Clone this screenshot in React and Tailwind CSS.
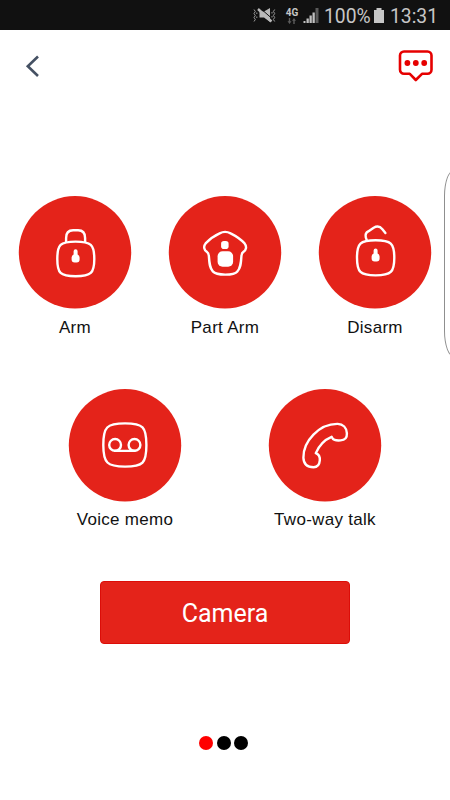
import React from "react";

const StatusBar = () => {
  return (
    <div className="flex h-[30px] items-center bg-[#111111] pl-[252px] font-['Roboto',sans-serif] text-[#c6c6c6]">
      <svg width="26" height="30" viewBox="0 0 26 30" fill="none" className="shrink-0">
        <path d="M7.500 11.500h4.500l6-3.500v14l-6-4.500H7.500z" fill="#b9b9b9" />
        <path d="M8 8l12 10.500" stroke="#111111" strokeWidth="1" />
        <path d="M6 9l13.500 12.500" stroke="#b9b9b9" strokeWidth="2.400" />
        <path
          d="M2 9.500l1.300 2-1.300 2 1.300 2-1.300 2 1.300 2-1.300 2M22.700 9.500l-1.300 2 1.300 2-1.300 2 1.300 2-1.300 2 1.300 2M4.800 12.500v1.500M4.800 16.500v1.500M20 12v1.500M20 16v1.500"
          stroke="#999999"
          strokeWidth="1"
        />
      </svg>
      <div className="ml-[7px] flex w-[14px] flex-col items-center">
        <span className="mt-px text-[10px] font-bold leading-[9px]">4G</span>
        <svg width="10" height="6" viewBox="0 0 10 6" fill="#5c5c5c" className="mt-px">
          <path d="M2.500 6L.5 3.300h1.300V0h1.400v3.300h1.300zM7 0l2 2.700H7.700V6H6.300V2.700H5z" />
        </svg>
      </div>
      <svg width="18" height="30" viewBox="0 0 18 30" className="ml-[3px] shrink-0">
        <path
          d="M1.500 21h2v2h-2zM4.500 18.500h2.300V23H4.500zM7.500 15.500h2.300V23H7.500zM10.500 12.500h2.300V23h-2.300z"
          fill="#c0c0c0"
        />
        <path d="M13.500 8h3v15h-3z" fill="#5a5a5a" />
      </svg>
      <span className="ml-[4px] mt-[3px] w-[46px] whitespace-nowrap text-[19.300px] leading-[30px]">100%</span>
      <svg width="12" height="30" viewBox="0 0 12 30" className="ml-[3px] shrink-0" fill="#c6c6c6">
        <path d="M3.500 8h5v2H11v13H1V10h2.500z" />
      </svg>
      <span className="ml-[5px] mt-[3px] whitespace-nowrap text-[19.300px] leading-[30px]">13:31</span>
    </div>
  );
};

const KeyHole = ({ y = 0 }) => (
  <path
    transform={`translate(0 ${y})`}
    d="M55 55.300a2 2 0 0 1 4 0v3.200q2 1 2 3v2q0 3-3 3h-2q-3 0-3-3v-2q0-2 2-3z"
    fill="#fff"
    stroke="none"
  />
);

const ArmIcon = () => (
  <>
    <path d="M57 45.700c15.500 0 18.700 3 18.700 17.300S72.500 80.300 57 80.300 38.700 77.300 38.700 63 41.500 45.700 57 45.700z" />
    <path d="M47.500 46v-4c0-5 2.500-7.700 7-7.700h5c4.500 0 7 2.700 7 7.700v4" />
    <KeyHole />
  </>
);

const PartArmIcon = () => (
  <>
    <path d="M51 37.500q5.500-3 11 0C67 40 72.500 43.800 76 47.500c2.500 3 1.500 7-1.200 8.500-1.500.8-1.800 2-2 4.500-.5 8-1 12-4 15-2 2.500-5 3.200-12.200 3.200s-10.200-.7-12.400-3.200c-2.900-3-3.400-7-3.900-15-.2-2.500-.5-3.700-2-4.500-2.700-1.500-3.800-5.500-1.300-8.500 3.500-3.700 8.500-7.500 14-10z" />
    <rect x="52.500" y="45" width="7.500" height="8.200" rx="2.800" fill="#fff" stroke="none" />
    <rect x="49" y="55.300" width="15.500" height="15.500" rx="5" fill="#fff" stroke="none" />
  </>
);

const DisarmIcon = () => (
  <>
    <path d="M57 44.300c15.500 0 18.700 3 18.700 17.500S72.500 79.500 57 79.500 38.400 76.300 38.400 61.800 41.500 44.300 57 44.300z" />
    <path d="M48.200 44.500l-1-3c-.8-3.200.2-4.800 2.400-6l5.500-3.700c3.500-2.100 6.200-1.600 8.700 1.500l3 3.900" />
    <KeyHole y={-0.8} />
  </>
);

const VoiceIcon = () => (
  <>
    <path d="M56.500 34.500c18 0 21.300 3.500 21.300 21.600s-3.300 21.600-21.300 21.600S34.700 74 34.700 56.100s3.300-21.600 21.800-21.600z" />
    <circle cx="46.500" cy="56" r="5.900" />
    <circle cx="65.900" cy="56" r="5.900" />
    <path d="M46.500 62h19.400" />
  </>
);

const TalkIcon = () => (
  <path d="M69 35c5.500.2 9 3.800 9.300 9.500.2 4.500-1.800 6.800-6.300 7-5.500.3-7.500-.2-9-3.600C55.500 51 50.500 56.500 47.200 64.200c3.500 1.300 4.300 3.500 4 7.300-.4 4.800-2.500 6.800-6.200 6.800-6.500 0-10-3.500-10.200-9.500C34.500 52.500 50.500 34.800 69 35z" />
);

const ActionButton = ({ label, icon }) => {
  return (
    <button className="flex w-[150px] flex-col items-center">
      <svg
        width="114"
        height="113"
        viewBox="0 0 114 113"
        fill="none"
        stroke="#fff"
        strokeWidth="2.400"
        strokeLinecap="round"
        strokeLinejoin="round"
      >
        <circle cx="57" cy="56.300" r="56.200" fill="#e4231a" stroke="none" />
        <g transform="translate(.6 -.1)">{icon}</g>
      </svg>
      <span className="mt-[6.500px] whitespace-nowrap text-[17px] leading-[24px] tracking-[0.300px] text-[#111111]">
        {label}
      </span>
    </button>
  );
};

const App = () => {
  return (
    <div className="relative h-[800px] w-[450px] overflow-hidden bg-white font-['Liberation_Sans',Arial,sans-serif]">
      <StatusBar />

      <header className="flex h-[70px] justify-between pl-[24px] pr-[16px] pt-[18px]">
        <button className="h-[36px]">
          <svg width="18" height="36" viewBox="0 0 18 36" fill="none" stroke="#455163" strokeWidth="2.600">
            <path d="M14 8.500L3.800 18.200l10.200 9.800" />
          </svg>
        </button>
        <button className="h-[36px]">
          <svg width="36" height="36" viewBox="0 0 36 36" fill="none" stroke="#e60000" strokeWidth="2.600">
            <path
              d="M6 3.500h23.500a4 4 0 0 1 4 4v14.300a4 4 0 0 1-4 4h-5.500L17.800 32l-6-6.200H6a4 4 0 0 1-4-4V7.500a4 4 0 0 1 4-4z"
              strokeLinejoin="round"
            />
            <g fill="#e60000" stroke="none">
              <circle cx="9.400" cy="15" r="2.900" />
              <circle cx="17.800" cy="15" r="2.900" />
              <circle cx="26.200" cy="15" r="2.900" />
            </g>
          </svg>
        </button>
      </header>

      <main className="flex flex-col items-center pt-[96px]">
        <div className="flex">
          <ActionButton label="Arm" icon={<ArmIcon />} />
          <ActionButton label="Part Arm" icon={<PartArmIcon />} />
          <ActionButton label="Disarm" icon={<DisarmIcon />} />
        </div>
        <div className="mt-[49px] flex gap-[50px]">
          <ActionButton label="Voice memo" icon={<VoiceIcon />} />
          <ActionButton label="Two-way talk" icon={<TalkIcon />} />
        </div>

        <button className="mt-[49px] h-[63px] w-[250px] rounded-[4px] border border-[#dc0d08] bg-[#e4231a] pt-[2px] font-['Roboto',sans-serif] text-[25px] text-white">
          Camera
        </button>

        <div className="mt-[92px] flex gap-[3.500px] pr-[3px]">
          <span className="size-[14px] rounded-full bg-[#ff0000]" />
          <span className="size-[14px] rounded-full bg-black" />
          <span className="size-[14px] rounded-full bg-black" />
        </div>
      </main>

      {/* edge panel handle, sits over the right side */}
      <div className="absolute -right-[14px] top-[170px] h-[187px] w-[20px] rounded-[10px/26px] border border-[#8f8f8f]" />
    </div>
  );
};

export default App;
